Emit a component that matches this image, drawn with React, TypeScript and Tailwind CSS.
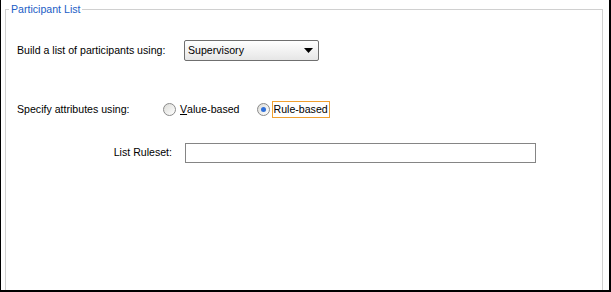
import { useState } from 'react'

export default function App() {
  const [mode, setMode] = useState<'value' | 'rule'>('rule')

  return (
    <div
      className="w-[611px] h-[292px] overflow-hidden bg-white border-l border-r-2 border-b-2 border-black pt-[2px] pl-[4px] pr-[6px] text-[10.6px] text-black"
      style={{ fontFamily: '"Liberation Sans", Arial, sans-serif' }}
    >
      <fieldset className="h-[300px] border border-[#d0d0d0]">
        <legend className="ml-[3px] px-[2px] leading-[14px] text-[#215dc6]">Participant List</legend>

        <div className="pl-[11px]">
          {/* Build list row */}
          <div className="mt-[24px] flex items-center">
            <span className="w-[167px] whitespace-nowrap">Build a list of participants using:</span>
            <div className="w-[135px] h-[21px] flex items-center justify-between pl-[3px] pr-[5px] border border-[#6f6f6f] rounded-[2px] bg-gradient-to-b from-white to-[#e6e6e6]">
              <span>Supervisory</span>
              <svg width="9" height="5" viewBox="0 0 9 5">
                <path d="M0 0 H9 L4.5 5 Z" fill="#000" />
              </svg>
            </div>
          </div>

          {/* Attribute mode row */}
          <div className="mt-[40px] flex items-center h-[17px]">
            <span className="w-[146px] whitespace-nowrap">Specify attributes using:</span>
            <label className="flex items-center cursor-default" onClick={() => setMode('value')}>
              <Radio checked={mode === 'value'} />
              <span className={`ml-[2px] h-[17px] flex items-center px-[1px] border ${mode === 'value' ? 'border-[#f0a030]' : 'border-transparent'}`}>
                <span className="underline">V</span>alue-based
              </span>
            </label>
            <label className="ml-[15px] flex items-center cursor-default" onClick={() => setMode('rule')}>
              <Radio checked={mode === 'rule'} />
              <span className={`ml-[2px] h-[17px] flex items-center px-[1px] border ${mode === 'rule' ? 'border-[#f0a030]' : 'border-transparent'}`}>
                Rule-based
              </span>
            </label>
          </div>

          {/* Ruleset row */}
          <div className="mt-[25px] flex items-center">
            <span className="w-[155px] text-right whitespace-nowrap">List Ruleset:</span>
            <div className="ml-[13px] w-[351px] h-[20px] border border-[#858585] bg-white" />
          </div>
        </div>
      </fieldset>
    </div>
  )
}

function Radio({ checked }: { checked: boolean }) {
  return (
    <span className="w-[13px] h-[13px] rounded-full border border-[#8a8a8a] bg-gradient-to-br from-[#dcdcd8] to-white flex items-center justify-center">
      {checked && <span className="w-[5px] h-[5px] rounded-full bg-[#2f6fd8]" />}
    </span>
  )
}
